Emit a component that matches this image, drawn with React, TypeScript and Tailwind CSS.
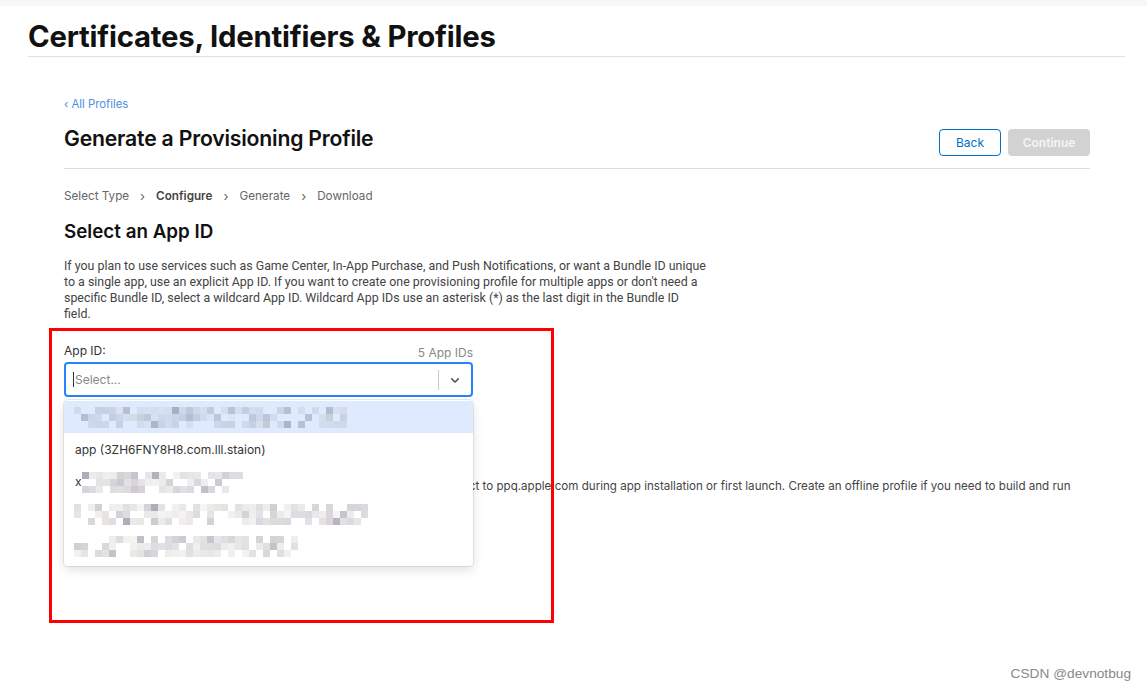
import React from "react";

function rand(seed: number) {
  let s = seed;
  return () => {
    s = (s * 9301 + 49297) % 233280;
    return s / 233280;
  };
}

const palettes = [
  ["#c7cedb", "#aab4c8", "#b9c2d6", "#d3dbe9", "#9aa3b5", "#c8d2e6", "#bfc6d4"],
  ["#d9d6d3", "#cfcbd1", "#e3dfda", "#bdb7c2", "#a9a2b0", "#dcdcdc", "#c6c9cf"],
];

function Mosaic({ width, height, seed, palette }: { width: number; height: number; seed: number; palette: number }) {
  const r = rand(seed);
  const cell = 7;
  const rects: React.ReactNode[] = [];
  const cols = Math.floor(width / cell);
  const rows = Math.floor(height / cell);
  for (let y = 0; y < rows; y++) {
    for (let x = 0; x < cols; x++) {
      const v = r();
      if (v < 0.25) continue;
      const p = palettes[palette];
      const c = p[Math.floor(r() * p.length)];
      rects.push(
        <rect key={`${x}-${y}`} x={x * cell} y={y * cell} width={cell} height={cell} fill={c} opacity={0.3 + r() * 0.6} />
      );
    }
  }
  return (
    <svg width={width} height={height}>
      {rects}
    </svg>
  );
}

export default function App() {
  const font = { fontFamily: "Inter, 'Noto Sans', Arial, sans-serif" };
  const para = { fontFamily: "Roboto, Arial, sans-serif" };
  return (
    <div className="w-[1147px] h-[694px] bg-white relative overflow-hidden text-[#333]" style={font}>
      <div className="h-[6px] bg-[#f7f7f7]" />
      <div className="pl-[28px] pr-[22px]">
        <h1 className="text-[29.3px] leading-[36px] font-bold text-[#111] pt-[13px] pb-[1px] tracking-[-0.2px]">
          Certificates, Identifiers &amp; Profiles
        </h1>
        <div className="h-px bg-[#e0e0e0]" />
      </div>

      <div className="pl-[64px] pr-[57px]">
        <div className="pt-[39px] text-[11.3px] text-[#4a8fe0] leading-[16px]">‹ All Profiles</div>
        <div className="flex justify-between items-start mt-[13px]">
          <h2 className="text-[21.2px] leading-[26px] font-semibold text-[#111] tracking-[-0.2px]">Generate a Provisioning Profile</h2>
          <div className="flex gap-[7px] pt-[4px]">
            <button className="w-[62px] h-[27px] border border-[#0070c9] rounded-[4px] text-[12px] text-[#0070c9]">Back</button>
            <button className="w-[82px] h-[27px] rounded-[4px] bg-[#d2d2d2] text-[12px] font-semibold text-[#f5f5f5]">Continue</button>
          </div>
        </div>
        <div className="h-px bg-[#dedede] mt-[12px]" />

        <div className="flex items-center text-[11.7px] text-[#666] mt-[19px] leading-[16px]">
          <span>Select Type</span>
          <span className="mx-[11px] text-[13px]">›</span>
          <span className="font-semibold text-[#444]">Configure</span>
          <span className="mx-[11px] text-[13px]">›</span>
          <span>Generate</span>
          <span className="mx-[11px] text-[13px]">›</span>
          <span>Download</span>
        </div>

        <h3 className="text-[18.8px] leading-[24px] font-semibold text-[#111] mt-[16px]">Select an App ID</h3>
        <p className="text-[12.4px] leading-[16px] text-[#444] mt-[14px] whitespace-nowrap" style={para}>
          If you plan to use services such as Game Center, In-App Purchase, and Push Notifications, or want a Bundle ID unique
          <br />
          to a single app, use an explicit App ID. If you want to create one provisioning profile for multiple apps or don't need a
          <br />
          specific Bundle ID, select a wildcard App ID. Wildcard App IDs use an asterisk (*) as the last digit in the Bundle ID
          <br />
          field.
        </p>

        <div className="w-[409px] mt-[21px] relative">
          <div className="flex justify-between items-end text-[12px] leading-[16px]">
            <span className="text-[#333]">App ID:</span>
            <span className="text-[#888] translate-y-[2px]">5 App IDs</span>
          </div>
          <div className="mt-[3px] h-[35px] border-2 border-[#2684ff] rounded-[4px] flex items-center">
            <div className="flex-1 flex items-center pl-[7px] text-[12px] text-[#888]">
              <span className="w-px h-[15px] bg-[#333] mr-[1px]" />
              Select...
            </div>
            <div className="w-px h-[20px] bg-[#ccc]" />
            <div className="w-[32px] flex justify-center text-[#555]">
              <svg width="14" height="14" viewBox="0 0 20 20" fill="currentColor">
                <path d="M4.516 7.548c.436-.446 1.043-.481 1.576 0L10 11.295l3.908-3.747c.533-.481 1.141-.446 1.574 0 .436.445.408 1.197 0 1.615-.406.418-4.695 4.502-4.695 4.502a1.095 1.095 0 0 1-1.576 0S4.924 9.581 4.516 9.163c-.409-.418-.436-1.17 0-1.615z" />
              </svg>
            </div>
          </div>

          <div className="mt-[81px] text-[11.6px] leading-[16px] text-[#444] whitespace-nowrap">
            Note: all profiles for in-house distribution will require the devices to connect to ppq.apple.com during app installation or first launch. Create an offline profile if you need to build and run
          </div>

          <div className="absolute left-0 top-[57px] w-[409px] h-[166px] bg-white rounded-[4px] shadow-[0_0_0_1px_rgba(0,0,0,0.08),0_4px_11px_rgba(0,0,0,0.12)] overflow-hidden py-[1px]">
            <div className="h-[32px] bg-[#deebff] flex items-center pl-[10px]">
              <Mosaic width={273} height={21} seed={11} palette={0} />
            </div>
            <div className="h-[33px] flex items-center pl-[11px] text-[12px] text-[#333]">app (3ZH6FNY8H8.com.lll.staion)</div>
            <div className="h-[32px] flex items-center pl-[11px] text-[12px] text-[#333]">
              <span>x</span>
              <Mosaic width={161} height={21} seed={37} palette={1} />
            </div>
            <div className="h-[32px] flex items-center pl-[10px]">
              <Mosaic width={294} height={21} seed={53} palette={1} />
            </div>
            <div className="h-[33px] flex items-center pl-[10px]">
              <Mosaic width={224} height={21} seed={71} palette={1} />
            </div>
          </div>
        </div>
      </div>

      <div className="absolute left-[49px] top-[328px] w-[505px] h-[295px] border-[3px] border-[#ff0000]" />

      <div className="absolute right-[16px] bottom-[9px] text-[13.7px] text-[#888]" style={{ fontFamily: "'Liberation Sans', Arial, sans-serif" }}>
        CSDN @devnotbug
      </div>
    </div>
  );
}
